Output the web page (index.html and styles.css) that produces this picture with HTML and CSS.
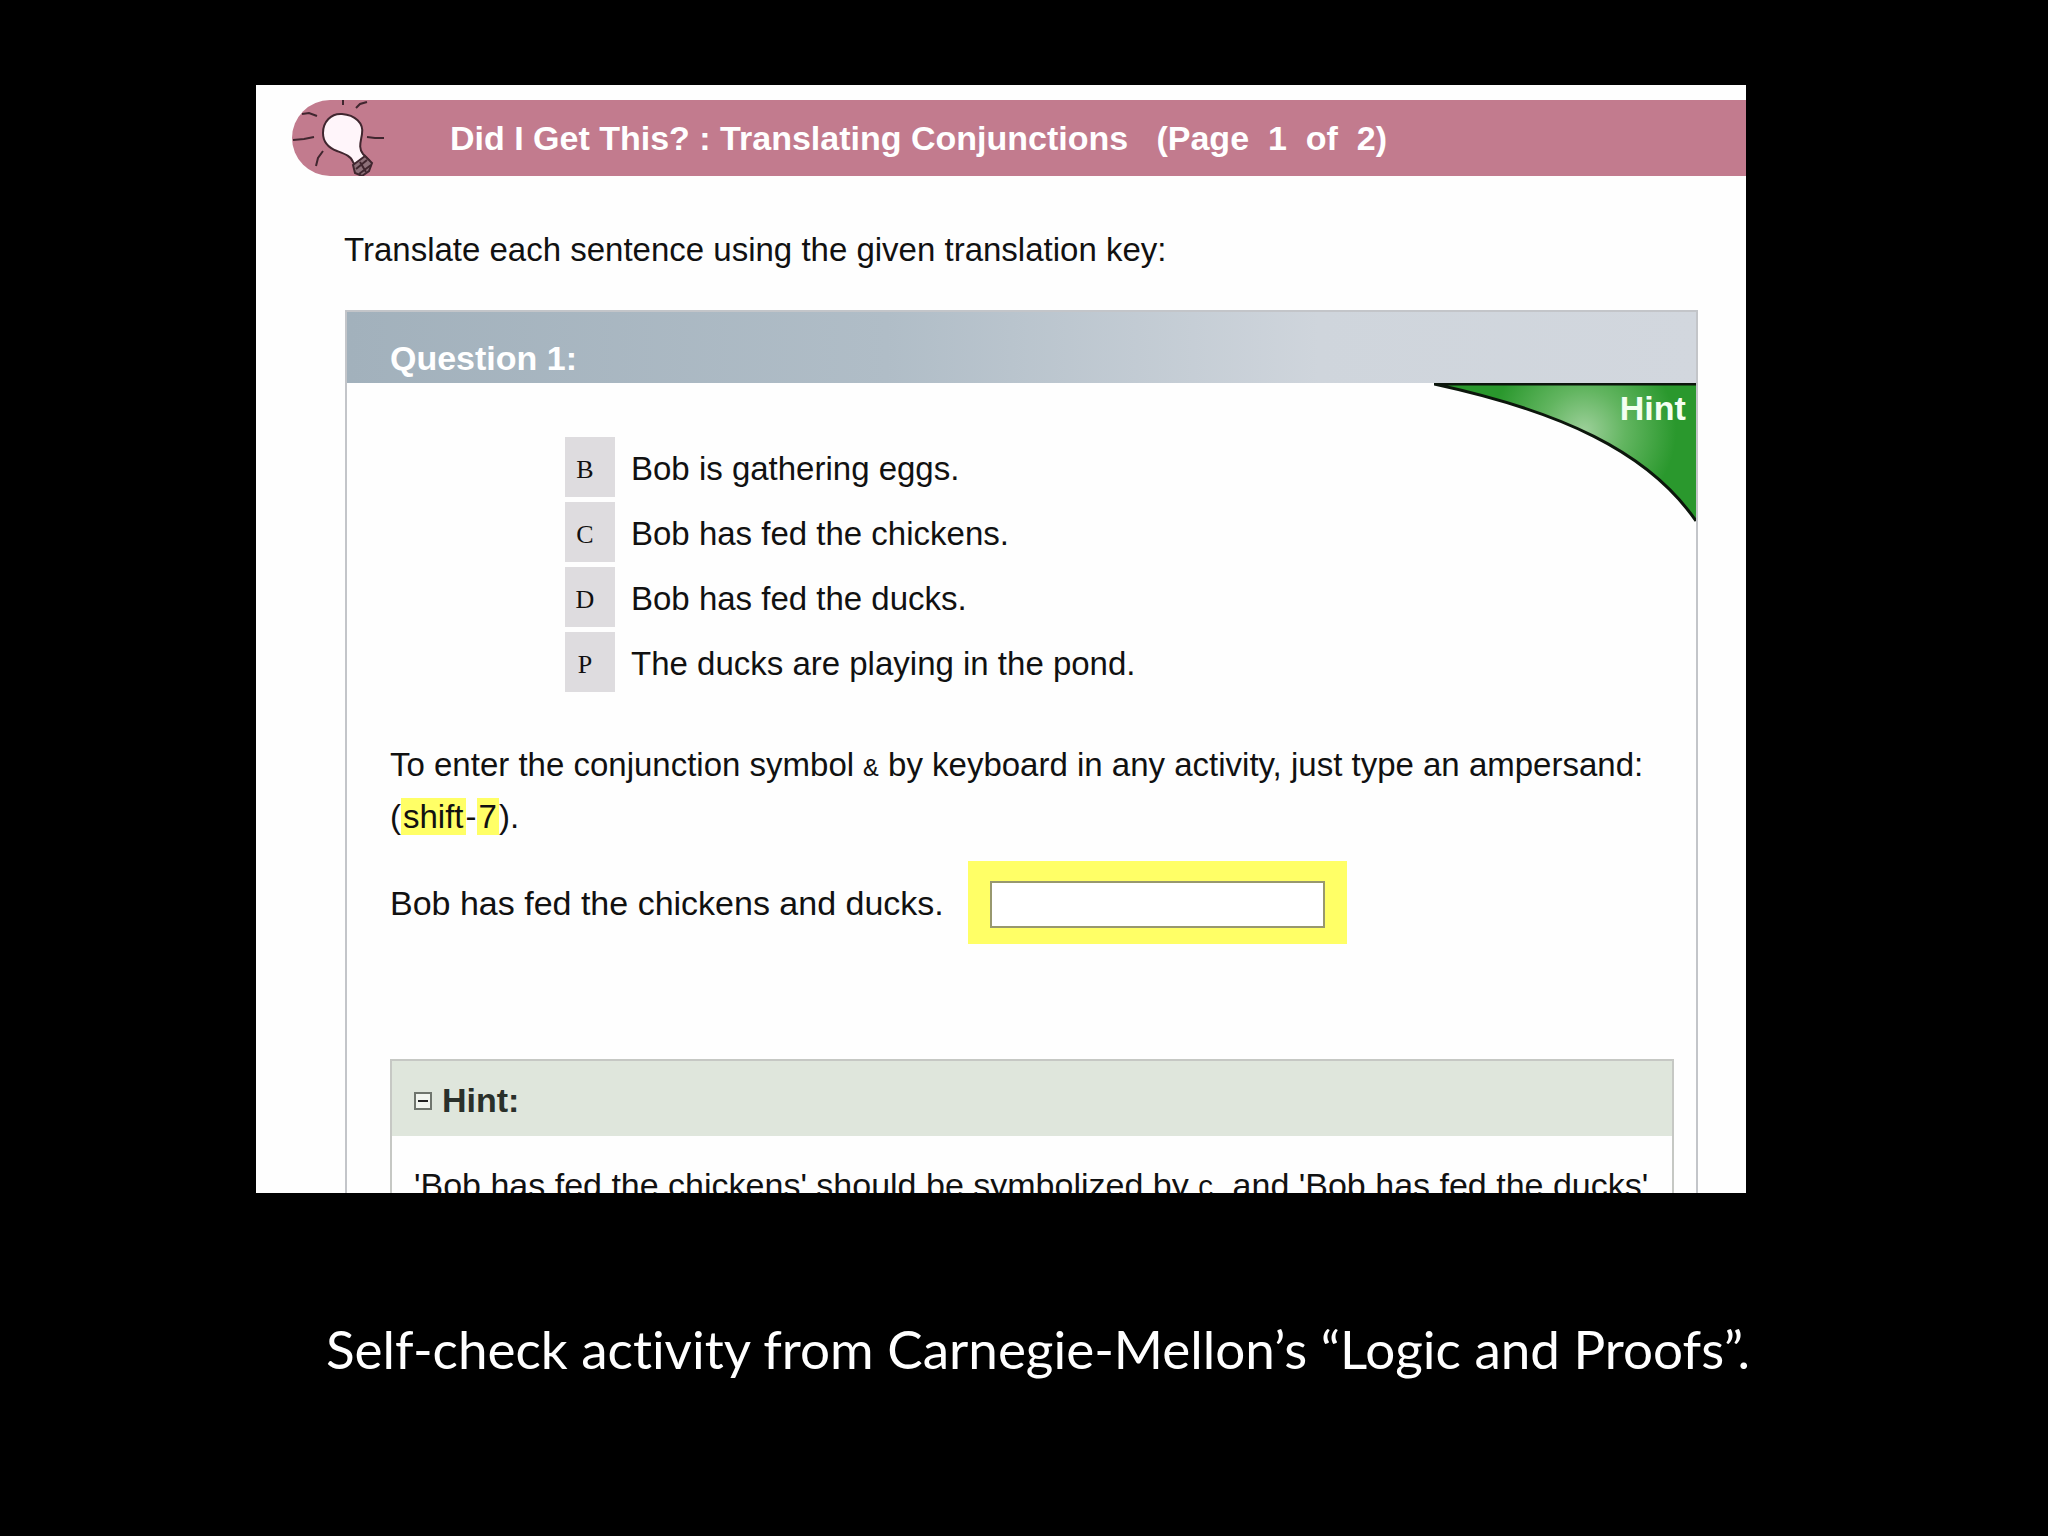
FILE: index.html
```html
<!DOCTYPE html>
<html lang="en">
<head>
  <meta charset="UTF-8">
  <meta name="viewport" content="width=device-width, initial-scale=1.0">
  <title>Did I Get This? : Translating Conjunctions</title>
  <link rel="stylesheet" href="styles.css">
</head>
<body>
  <main class="panel">
    <header class="page-header">
      <svg class="bulb" viewBox="0 0 100 76" aria-hidden="true">
        <path d="M50 14 C39 13 31 22 31 33 C31 43 37 48 45 51 C53 54 59 56 61 62 L65 68 L77 60 L71 54 C66 48 69 41 70 34 C72 23 63 15 50 14 Z" fill="#fff5fa" stroke="#40262f" stroke-width="2"/>
        <path d="M61 65 L73 56 L80 63 L77 71 L70 76 L63 73 Z" fill="#8c7079" stroke="#40262f" stroke-width="2"/>
        <path d="M64 69 L75 60 M67 74 L79 65 M68 62 L74 72" stroke="#40262f" stroke-width="2"/>
        <path d="M51 0 V5 M64 8 L68 4 L75 2 M10 14 L17 13 L25 16 M1 40 L12 39 L22 37 M75 37 L83 38 L92 38 M31 51 L26 58 L24 66" fill="none" stroke="#40262f" stroke-width="2"/>
      </svg>
      <h1>Did I Get This? : Translating Conjunctions &nbsp; (Page &nbsp;1 &nbsp;of &nbsp;2)</h1>
    </header>

    <p class="intro">Translate each sentence using the given translation key:</p>

    <section class="question">
      <h2 class="question-title">Question 1:</h2>
      <div class="question-body">
        <button type="button" class="hint-tab">
          <svg viewBox="0 0 262 140" aria-hidden="true">
            <defs>
              <radialGradient id="shine" gradientUnits="userSpaceOnUse" cx="150" cy="48" r="92">
                <stop offset="0" stop-color="#9dd09a"/>
                <stop offset="0.45" stop-color="#62b560"/>
                <stop offset="1" stop-color="#2a982d"/>
              </radialGradient>
            </defs>
            <path d="M0 1 H262 V138 C214 68 125 28 0 1 Z" fill="url(#shine)"/>
            <path d="M262 1 H0 C125 28 214 68 262 138" fill="none" stroke="#0c160c" stroke-width="3"/>
          </svg>
          <span>Hint</span>
        </button>

        <dl class="key">
          <dt>B</dt><dd>Bob is gathering eggs.</dd>
          <dt>C</dt><dd>Bob has fed the chickens.</dd>
          <dt>D</dt><dd>Bob has fed the ducks.</dd>
          <dt>P</dt><dd>The ducks are playing in the pond.</dd>
        </dl>

        <p class="note">To enter the conjunction symbol <span class="symbol">&amp;</span> by keyboard in any activity, just type an ampersand: (<mark>shift</mark>-<mark>7</mark>).</p>

        <div class="answer">
          <label for="answer">Bob has fed the chickens and ducks.</label>
          <div class="answer-box"><input type="text" id="answer" name="answer"></div>
        </div>

        <section class="hint">
          <h3 class="hint-title">
            <button type="button" class="toggle" aria-label="Collapse hint"></button>
            Hint:
          </h3>
          <p class="hint-text">'Bob has fed the chickens' should be symbolized by <span class="symbol">C</span>, and 'Bob has fed the ducks'</p>
        </section>
      </div>
    </section>
  </main>

  <p class="caption">Self-check activity from Carnegie-Mellon’s “Logic and Proofs”.</p>
</body>
</html>
```
FILE: styles.css
```css
* {
  box-sizing: border-box;
}

body {
  margin: 0;
  padding-top: 85px;
  background-color: #000000;
  color: #111111;
  font-family: "Liberation Sans", Arial, Helvetica, sans-serif;
  font-size: 33px;
  line-height: 52px;
}

h1, h2, h3, p, dl, dd {
  margin: 0;
}

h1, h2, h3 {
  font-size: 34px;
}

.panel {
  width: 72.75%;
  margin-left: 12.5%;
  padding-top: 15px;
  background-color: #fefefe;
}

.page-header {
  display: flex;
  align-items: center;
  gap: 58px;
  height: 76px;
  margin-left: 36px;
  border-radius: 38px 0 0 38px;
  background-color: #c27b8e;
  color: #ffffff;
}

.bulb {
  width: 100px;
  height: 76px;
}

.intro {
  margin: 48px 48px 34px 88px;
}

.question {
  margin: 0 48px 0 89px;
  border: 2px solid #c3c5c9;
  border-bottom: none;
}

.question-title {
  padding: 26px 43px 5px;
  line-height: 40px;
  color: #ffffff;
  background: linear-gradient(to right, #a2b1bc 0%, #b0bdc7 40%, #cfd5dc 72%, #d2d7de 100%);
}

.question-body {
  position: relative;
  padding: 54px 22px 0 43px;
}

.hint-tab {
  position: absolute;
  top: 0;
  right: 0;
  width: 262px;
  height: 140px;
  padding: 0;
  border: none;
  background: none;
  cursor: pointer;
}

.hint-tab svg {
  display: block;
  width: 100%;
}

.hint-tab span {
  position: absolute;
  top: 5px;
  right: 10px;
  font-family: "Liberation Sans", Arial, sans-serif;
  font-size: 34px;
  font-weight: bold;
  line-height: 40px;
  color: #f4fff2;
}

.key {
  display: grid;
  grid-template-columns: 50px 1fr;
  gap: 5px 16px;
  margin-left: 175px;
}

.key dt {
  padding: 6px 10px 0 0;
  background-color: #dedcdf;
  font-family: "Liberation Serif", serif;
  font-size: 26px;
  line-height: 54px;
  text-align: center;
}

.key dd {
  padding-top: 4px;
  line-height: 56px;
}

.note {
  margin-top: 47px;
}

.symbol {
  font-family: "Liberation Mono", monospace;
  font-size: 26px;
  line-height: 1;
}

mark {
  padding: 0 2px;
  background-color: #ffff66;
  color: inherit;
}

.answer {
  display: flex;
  align-items: center;
  gap: 24px;
  margin-top: 18px;
  font-size: 34px;
}

.answer-box {
  padding: 20px 22px 16px;
  background-color: #ffff66;
}

.answer-box input {
  display: block;
  width: 335px;
  height: 47px;
  padding: 0 8px;
  border: 2px solid #98986e;
  background-color: #ffffff;
  font: inherit;
}

.hint {
  margin-top: 115px;
  border: 2px solid #c6c8c4;
  border-bottom: none;
}

.hint-title {
  display: flex;
  align-items: center;
  gap: 10px;
  padding: 4px 22px 0;
  line-height: 71px;
  color: #2a302a;
  background-color: #dfe6dc;
}

.toggle {
  display: flex;
  align-items: center;
  justify-content: center;
  width: 18px;
  height: 18px;
  padding: 0;
  border: 2px solid #6f756d;
  background-color: #f2f6f0;
}

.toggle::before {
  content: "";
  width: 10px;
  height: 2px;
  background-color: #222222;
}

/* only the top of the first line shows */
.hint-text {
  height: 57px;
  padding: 23px 22px 0;
  overflow: hidden;
  font-size: 34px;
  white-space: nowrap;
}

.caption {
  margin-top: 124px;
  padding-left: 326px;
  font-family: Lato, Calibri, sans-serif;
  font-size: 53px;
  font-variant-ligatures: none;
  line-height: 64px;
  color: #ffffff;
}
```
